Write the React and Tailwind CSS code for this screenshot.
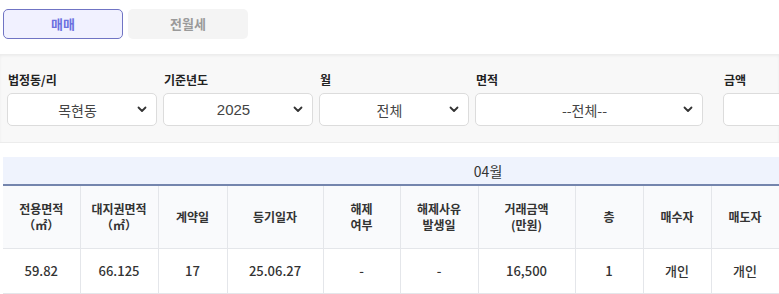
import React from "react";

const FONT = { fontFamily: '"Noto Sans CJK KR", "Noto Sans", sans-serif' };

function Chevron() {
  return (
    <svg width="10" height="7" viewBox="0 0 10 7" className="shrink-0">
      <path d="M1.5 1.5 L5 5 L8.5 1.5" fill="none" stroke="#333" strokeWidth="1.8" strokeLinecap="round" strokeLinejoin="round" />
    </svg>
  );
}

function Field({ label, value, width, noChevron }) {
  return (
    <div className="flex flex-col shrink-0" style={{ width }}>
      <div className="text-[12px] font-bold text-[#222] leading-[16px] mb-[5px] pl-[1px]">{label}</div>
      <div className="h-[33px] bg-white border border-[#dcdcdc] rounded-[5px] flex items-center pl-[10px] pr-[9px]">
        <div
          className="flex-1 text-center text-[14px] text-[#444] leading-none"
          style={value === "2025" ? { fontFamily: '"Liberation Sans", sans-serif', fontSize: "15px" } : undefined}
        >
          {value}
        </div>
        {!noChevron && <Chevron />}
      </div>
    </div>
  );
}

const cols = [77, 78, 69, 96, 77, 78, 97, 68, 68, 68, 97, 97];
const headers = [
  ["전용면적", "（㎡）"],
  ["대지권면적", "（㎡）"],
  ["계약일"],
  ["등기일자"],
  ["해제", "여부"],
  ["해제사유", "발생일"],
  ["거래금액", "(만원)"],
  ["층"],
  ["매수자"],
  ["매도자"],
  [],
  [],
];
const row = ["59.82", "66.125", "17", "25.06.27", "-", "-", "16,500", "1", "개인", "개인", "", ""];

export default function App() {
  return (
    <div className="w-[779px] h-[294px] overflow-hidden bg-white" style={FONT}>
      <div className="h-[54px] flex items-start pt-[9px] pl-[3px] gap-[5px]">
        <button className="w-[120px] h-[30px] rounded-[5px] border border-[#7074c4] bg-[#f1f1ff] text-[13px] font-bold text-[#6d70e0]">
          매매
        </button>
        <button className="w-[120px] h-[30px] rounded-[5px] bg-[#f4f4f4] text-[13px] font-bold text-[#9a9a9a]">
          전월세
        </button>
      </div>
      <div className="h-[89px] bg-[#f8f8f8] border-b border-[#ececec] shadow-[inset_0_2px_3px_rgba(0,0,0,0.05)] flex pt-[18px] pl-[7px] gap-[6px]">
        <Field label="법정동/리" value="목현동" width={150} />
        <Field label="기준년도" value="2025" width={150} />
        <Field label="월" value="전체" width={150} />
        <Field label="면적" value="--전체--" width={228} />
        <div className="w-[8px] shrink-0" />
        <Field label="금액" value="" width={120} noChevron />
      </div>
      <div className="pt-[14px] pl-[3px]">
        <table className="table-fixed border-collapse w-[970px]">
          <colgroup>
            {cols.map((w, i) => (
              <col key={i} style={{ width: w }} />
            ))}
          </colgroup>
          <thead>
            <tr className="h-[28px] bg-[#eff3fd]">
              <th colSpan={12} className="border-b-2 border-[#7485ad] text-[14px] font-normal text-[#333] leading-none">
                04월
              </th>
            </tr>
            <tr className="h-[63px] bg-[#f9fafc]">
              {headers.map((h, i) => (
                <th
                  key={i}
                  className={`text-[12px] font-bold text-[#333] leading-[16px] border-b border-[#e4e6ea] ${i < headers.length - 1 ? "border-r" : ""}`}
                >
                  {h.map((l, j) => (
                    <div key={j}>{l}</div>
                  ))}
                </th>
              ))}
            </tr>
          </thead>
          <tbody>
            <tr className="h-[45px] bg-white">
              {row.map((v, i) => (
                <td
                  key={i}
                  className={`text-center text-[13px] font-medium text-[#333] border-b border-[#e4e6ea] ${i < row.length - 1 ? "border-r" : ""}`}
                >
                  {v}
                </td>
              ))}
            </tr>
          </tbody>
        </table>
      </div>
    </div>
  );
}
